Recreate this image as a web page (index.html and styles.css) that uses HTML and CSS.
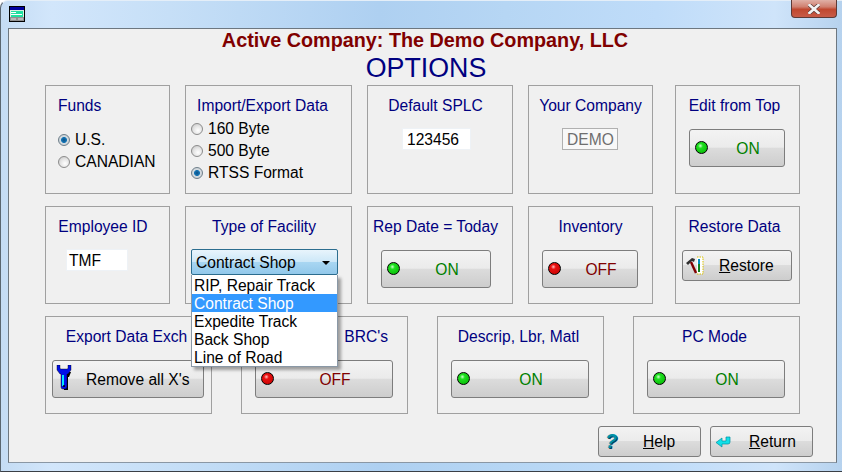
FILE: index.html
```html
<!DOCTYPE html>
<html lang="en">
<head>
<meta charset="utf-8">
<title>Options</title>
<link rel="stylesheet" href="styles.css">
</head>
<body>
<div class="window">
  <div class="titlebar">
    <svg class="app-icon" width="16" height="16" viewBox="0 0 16 16"><rect x="0.5" y="0.5" width="15" height="15" fill="#d8f0e0" stroke="#000"/><rect x="1" y="1" width="14" height="3" fill="#0000a0"/><rect x="2" y="5" width="12" height="6" fill="#20e0a0"/><path d="M2 6.500h5M2 8.500h11" stroke="#fff" stroke-width="1"/><rect x="1" y="11" width="14" height="4" fill="#909090"/><path d="M2 13h5M9 13h5" stroke="#e0e0e0"/></svg>
    <div class="close">
      <svg width="12" height="10" viewBox="0 0 12 10"><path d="M1.500 1l9 8M10.500 1l-9 8" stroke="#5a3a36" stroke-width="4" stroke-linecap="round"/><path d="M1.500 1l9 8M10.500 1l-9 8" stroke="#f4f4f4" stroke-width="2.600" stroke-linecap="square"/></svg>
    </div>
  </div>
  <div class="client">
    <div class="company">Active Company: The Demo Company, LLC</div>
    <div class="heading">OPTIONS</div>

    <div class="grid">
      <section class="panel">
        <div class="label label-start">Funds</div>
        <div class="radios radios-funds">
          <div class="radio-row"><span class="radio checked"></span>U.S.</div>
          <div class="radio-row"><span class="radio"></span>CANADIAN</div>
        </div>
      </section>
      <section class="panel">
        <div class="label nudge-12">Import/Export Data</div>
        <div class="radios radios-import">
          <div class="radio-row"><span class="radio"></span>160 Byte</div>
          <div class="radio-row"><span class="radio"></span>500 Byte</div>
          <div class="radio-row"><span class="radio checked"></span>RTSS Format</div>
        </div>
      </section>
      <section class="panel">
        <div class="label nudge-9">Default SPLC</div>
        <div class="input input-splc">123456</div>
      </section>
      <section class="panel">
        <div class="label">Your Company</div>
        <div class="input input-company">DEMO</div>
      </section>
      <section class="panel panel-last">
        <div class="label nudge-6">Edit from Top</div>
        <button class="btn btn-96"><span class="led on"></span><span class="btn-text on-text">ON</span></button>
      </section>

      <section class="panel">
        <div class="label nudge-9">Employee ID</div>
        <div class="input input-emp">TMF</div>
      </section>
      <section class="panel">
        <div class="label nudge-9">Type of Facility</div>
        <div class="combo">
          <div class="combo-face">Contract Shop<span class="combo-arrow"></span></div>
          <div class="combo-list">
            <div class="combo-item">RIP, Repair Track</div>
            <div class="combo-item selected">Contract Shop</div>
            <div class="combo-item">Expedite Track</div>
            <div class="combo-item">Back Shop</div>
            <div class="combo-item">Line of Road</div>
          </div>
        </div>
      </section>
      <section class="panel">
        <div class="label nudge-9">Rep Date = Today</div>
        <button class="btn btn-110 btn-left"><span class="led on"></span><span class="btn-text on-text">ON</span></button>
      </section>
      <section class="panel">
        <div class="label">Inventory</div>
        <button class="btn btn-96 btn-left"><span class="led off"></span><span class="btn-text off-text">OFF</span></button>
      </section>
      <section class="panel panel-last">
        <div class="label nudge-6">Restore Data</div>
        <button class="btn btn-110 btn-short">
          <svg class="icon-hammer" width="19" height="19" viewBox="0 0 19 19"><path d="M12 1h6v17h-6" fill="#fff" stroke="#d8c000" stroke-dasharray="1.500 1"/><path d="M1 7L7 2l3 1-1 3-2-1-4 4z" fill="#303030"/><path d="M6 6l5 11" stroke="#800000" stroke-width="2.400"/><rect x="13" y="3" width="2" height="5" fill="#0090c0"/><path d="M14 8v8" stroke="#108020" stroke-width="2"/></svg>
          <span class="restore-text"><u>R</u>estore</span>
        </button>
      </section>
    </div>

    <div class="row-three">
      <section class="panel">
        <div class="label nudge-4">Export Data Exch</div>
        <button class="btn btn-wide btn-remove">
          <svg class="icon-wrench" width="16" height="25" viewBox="0 0 16 25"><path d="M4 6h10l-2 5h-1v13H7V11H5z" fill="#000" transform="translate(1 1)"/><path d="M1 0v5l3 4h1v13q0 2 2 2h2q2 0 2-2V9h1l3-4V0l-3 0v3q0 1-1 1H5Q4 4 4 3V0z" fill="#0010e8" stroke="#000" stroke-width=".4"/><path d="M7 10v11" stroke="#00e8ff" stroke-width="2"/><circle cx="8" cy="21" r="1" fill="#000"/></svg>
          <span class="remove-text">Remove all X's</span>
        </button>
      </section>
      <section class="panel">
        <div class="label label-end">BRC's</div>
        <button class="btn btn-wide"><span class="led off"></span><span class="btn-text off-text">OFF</span></button>
      </section>
      <section class="panel">
        <div class="label nudge-4">Descrip, Lbr, Matl</div>
        <button class="btn btn-wide"><span class="led on"></span><span class="btn-text on-text">ON</span></button>
      </section>
      <section class="panel">
        <div class="label nudge-4">PC Mode</div>
        <button class="btn btn-wide"><span class="led on"></span><span class="btn-text on-text">ON</span></button>
      </section>
    </div>

    <div class="actions">
      <button class="btn btn-action"><span class="help-mark">?</span><span class="action-text help-text"><u>H</u>elp</span></button>
      <button class="btn btn-action btn-return">
        <svg class="icon-return" width="16" height="12" viewBox="0 0 16 12"><path d="M15 1v5q0 2-2 2H7v3L1 6.500 7 2v3h4V1z" fill="#10e0e8" stroke="#0090a0" stroke-width=".7"/></svg>
        <span class="action-text return-text"><u>R</u>eturn</span>
      </button>
    </div>
  </div>
</div>
</body>
</html>
```
FILE: styles.css
```css
* { box-sizing: border-box; }
html, body { margin: 0; padding: 0; }
body {
  width: 842px;
  height: 472px;
  overflow: hidden;
  font-family: "Liberation Sans", Arial, sans-serif;
  font-size: 15.6px;
  color: #000;
}
.window {
  height: 472px;
  padding: 0 5px 8px 8px;
  border-top: 1px solid #e4eef8;
  border-left: 1px solid #5a6670;
  border-bottom: 1px solid #3a3f46;
  border-top-left-radius: 8px;
  background: linear-gradient(90deg, #c4dcf4 0%, #d2e6fb 6%, #c6dff7 20%, #aed0f1 45%, #b6d6f4 60%, #bfdcf9 78%, #cfe4fa 92%, #b6d2ee 100%);
}
.titlebar {
  height: 27px;
  display: flex;
  align-items: flex-start;
  justify-content: space-between;
}
.app-icon { margin-top: 5px; }
.close {
  width: 46px;
  height: 18px;
  margin-top: -1px;
  display: flex;
  align-items: center;
  justify-content: center;
  border: 1px solid #5e3a36;
  border-top: 0;
  border-radius: 0 0 4px 4px;
  background: linear-gradient(180deg, #e0b0a6 0%, #d08070 40%, #c04830 55%, #c85c48 100%);
}
.client {
  height: 435px;
  margin-left: -1px;
  border: 1px solid #6d7780;
  border-bottom-color: #8a97a4;
  background: #f0f0f0;
}
.company {
  height: 22px;
  padding-left: 5px;
  text-align: center;
  font-size: 19.800px;
  font-weight: bold;
  line-height: 22px;
  color: #800000;
}
.heading {
  height: 34px;
  padding-left: 7px;
  text-align: center;
  font-size: 26.800px;
  line-height: 34px;
  color: #000080;
}
.grid {
  margin-left: 36px;
  display: grid;
  grid-template-columns: 125px 167px 146px 125px 132px;
  grid-template-rows: 109px 98px;
  column-gap: 15px;
  row-gap: 12px;
}
.panel {
  position: relative;
  display: flex;
  flex-direction: column;
  align-items: center;
  padding-top: 11px;
  border: 1px solid #a0a0a0;
  background: #f0f0f0;
}
.panel-last { margin-left: 7px; }
.label {
  height: 18px;
  margin-bottom: 14px;
  line-height: 18px;
  color: #000080;
  white-space: nowrap;
}
.label-start { align-self: flex-start; margin-left: 12px; }
.label-end { align-self: flex-end; margin-right: 19px; }
.nudge-4 { padding-right: 4px; }
.nudge-6 { padding-right: 6px; }
.nudge-9 { padding-right: 9px; }
.nudge-12 { padding-right: 12px; }
.radios { align-self: flex-start; display: flex; flex-direction: column; }
.radios-funds { margin: 0 0 0 12px; }
.radios-import { margin: -11px 0 0 5px; }
.radio-row {
  height: 22px;
  display: flex;
  align-items: center;
  white-space: nowrap;
}
.radio {
  width: 12px;
  height: 12px;
  margin-right: 5px;
  border: 1px solid #8c8c8c;
  border-radius: 50%;
  background: radial-gradient(circle at 60% 65%, #fff 0%, #e4e4e4 50%, #c0c0c0 100%);
}
.radio.checked {
  border-color: #6f7f8a;
  background: radial-gradient(circle at 50% 50%, #0a4f86 0%, #1678b8 38%, #d4dbe0 46%, #c4cbd0 100%);
}
.input {
  height: 22px;
  margin-top: -1px;
  padding-left: 4px;
  line-height: 21px;
  background: #fff;
  border: 1px solid #eef2f6;
}
.input-splc { width: 69px; margin-right: 7px; }
.input-company {
  width: 56px;
  margin-right: 1px;
  color: #6f6f6f;
  border-color: #b0b0b0;
  background: #f8f8f8;
}
.input-emp { width: 62px; margin-right: 21px; padding-left: 2px; }
.combo {
  position: relative;
  width: 147px;
  margin-top: -1px;
  margin-right: 8px;
}
.combo-face {
  height: 26px;
  padding: 1px 4px 0;
  display: flex;
  align-items: center;
  justify-content: space-between;
  line-height: 24px;
  border: 1px solid #2c6d8f;
  border-radius: 2px;
  background: linear-gradient(180deg, #e8f4fc 0%, #cde8f8 48%, #a8d6f2 52%, #92c8ea 100%);
}
.combo-arrow {
  width: 0;
  height: 0;
  margin-right: 3px;
  border-left: 4px solid transparent;
  border-right: 4px solid transparent;
  border-top: 4px solid #000;
}
.combo-list {
  position: absolute;
  top: 26px;
  left: 0;
  width: 147px;
  padding-top: 1px;
  z-index: 5;
  background: #fff;
  border: 1px solid #8a98a6;
  border-top: 0;
  box-shadow: 3px 3px 3px rgba(0, 0, 0, .35);
}
.combo-item {
  height: 18px;
  padding-left: 2px;
  line-height: 20px;
  white-space: nowrap;
}
.combo-item.selected { background: #3399ff; color: #fff; }
.btn {
  display: flex;
  align-items: center;
  height: 38px;
  margin-right: 1px;
  padding: 0 0 0 5px;
  font: inherit;
  color: #000;
  border: 1px solid #7d7d7d;
  border-radius: 3px;
  background: linear-gradient(180deg, #f3f3f3 0%, #ebebeb 48%, #dcdcdc 50%, #cdcdcd 100%);
}
.btn-96 { width: 96px; }
.btn-110 { width: 110px; }
.btn-wide { width: 138px; }
.btn-remove { width: 152px; padding-left: 3px; }
.btn-left { align-self: flex-start; margin-left: 13px; }
.btn-short { height: 31px; padding-left: 2px; align-items: flex-start; }
.led {
  flex: none;
  width: 13px;
  height: 13px;
  margin-top: -2px;
  border: 1px solid #000;
  border-radius: 50%;
}
.led.on { background: radial-gradient(circle at 40% 35%, #d0ffd0 0%, #20e020 25%, #00b000 100%); }
.led.off { background: radial-gradient(circle at 40% 35%, #ffc0c0 0%, #e81010 25%, #c00000 100%); }
.btn-text { flex: 1; padding: 2px 0 0 4px; text-align: center; }
.on-text { color: #008000; }
.off-text { color: #800000; }
.icon-hammer { margin-top: 5px; flex: none; }
.restore-text { margin: 6px 0 0 15px; }
.icon-wrench { flex: none; margin-top: -3px; }
.remove-text { margin-left: 14px; padding-top: 2px; white-space: nowrap; }
.row-three {
  margin: 12px 0 0 36px;
  display: grid;
  grid-template-columns: repeat(4, 167px);
  grid-template-rows: 98px;
  column-gap: 29px;
}
.actions {
  margin: 12px 22px 0 0;
  display: flex;
  justify-content: flex-end;
  gap: 8px;
}
.btn-action { width: 103px; height: 31px; padding-left: 6px; }
.help-mark {
  width: 12px;
  font-size: 20px;
  font-weight: bold;
  font-style: italic;
  color: #0090a8;
  text-shadow: 1px 1px 0 #004060;
}
.icon-return { flex: none; margin-left: -2px; }
.action-text { white-space: nowrap; }
.help-text { margin-left: 26px; }
.return-text { margin-left: 18px; }
```
